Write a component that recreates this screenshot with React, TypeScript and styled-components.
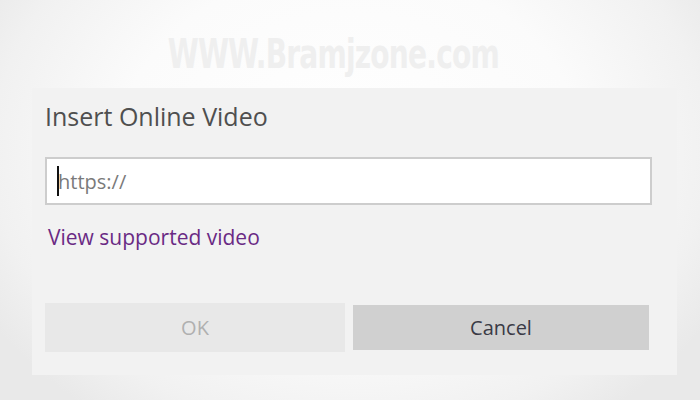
import styled, { createGlobalStyle } from 'styled-components';

const GlobalStyle = createGlobalStyle`
  html, body {
    margin: 0;
    padding: 0;
  }
  body {
    font-family: 'Open Sans', 'Noto Sans', sans-serif;
  }
`;

function App() {
  return (
    <>
      <GlobalStyle />
      <Page>
        <Header>
          <Watermark>WWW.Bramjzone.com</Watermark>
        </Header>
        <Dialog>
          <Title>Insert Online Video</Title>
          <UrlBox>
            <Caret />
            <UrlText>https://</UrlText>
          </UrlBox>
          <Link>View supported video</Link>
          <ButtonRow>
            <Button $primary>OK</Button>
            <Button>Cancel</Button>
          </ButtonRow>
        </Dialog>
      </Page>
    </>
  );
}

const Page = styled.div`
  width: 700px;
  height: 400px;
  overflow: hidden;
  background: radial-gradient(ellipse 420px 330px at 350px 150px, #ffffff 0%, #fbfbfb 55%, #f1f1f1 85%, #e9e9e9 100%);
  display: flex;
  flex-direction: column;
`;

const Header = styled.div`
  height: 88px;
  display: flex;
  justify-content: center;
  box-sizing: border-box;
  padding-top: 32px;
  padding-right: 34px;
`;

const Watermark = styled.div`
  font-family: 'DejaVu Sans', sans-serif;
  font-stretch: condensed;
  font-weight: bold;
  font-size: 40px;
  line-height: 44px;
  letter-spacing: -1px;
  color: #efefef;
  transform: scaleX(0.78);
`;

const Dialog = styled.div`
  margin-left: 32px;
  width: 645px;
  height: 287px;
  box-sizing: border-box;
  background: #f2f2f2;
  padding: 10px 0 0 13px;
  display: flex;
  flex-direction: column;
`;

const Title = styled.h1`
  margin: 0;
  font-weight: normal;
  font-size: 25px;
  line-height: 36px;
  color: #4f4f4f;
`;

const UrlBox = styled.div`
  margin-top: 23px;
  width: 607px;
  height: 48px;
  box-sizing: border-box;
  background: #ffffff;
  border: 2px solid #cdcdcd;
  display: flex;
  align-items: center;
  padding-left: 10px;
`;

const Caret = styled.div`
  width: 2px;
  height: 30px;
  background: #111;
`;

const UrlText = styled.span`
  font-size: 20px;
  color: #7a7a7a;
  margin-left: -1px;
`;

const Link = styled.a`
  margin-top: 18px;
  margin-left: 3px;
  font-size: 21px;
  line-height: 28px;
  color: #6a2a84;
  cursor: pointer;
`;

const ButtonRow = styled.div`
  margin-top: 52px;
  display: flex;
  align-items: center;
  gap: 8px;
`;

const Button = styled.div<{ $primary?: boolean }>`
  width: ${(p) => (p.$primary ? '300px' : '296px')};
  height: ${(p) => (p.$primary ? '49px' : '45px')};
  display: flex;
  align-items: center;
  justify-content: center;
  font-size: 20px;
  background: ${(p) => (p.$primary ? '#e8e8e8' : '#d0d0d0')};
  color: ${(p) => (p.$primary ? '#b0b0b0' : '#3a3a45')};
`;

export default App;
